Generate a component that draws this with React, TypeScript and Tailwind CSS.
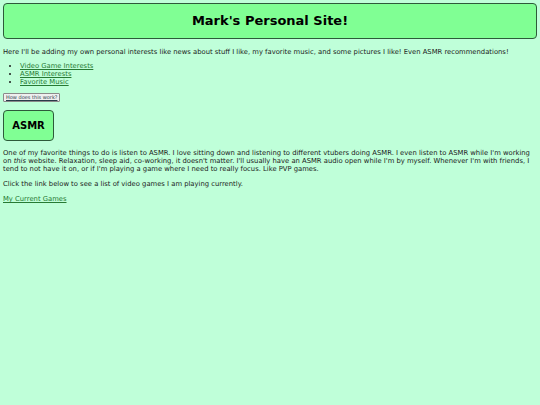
export default function App() {
  return (
    <div className="min-h-[405px] bg-[#bfffd9] p-[3px] text-[6.8px] leading-[8px] text-[#1a1a1a] font-['DejaVu_Sans',Verdana,sans-serif]">
      <header className="flex h-[36px] items-center justify-center rounded-[4px] border-[1.5px] border-[#2d5a3a] bg-[#80ff94]">
        <h1 className="text-[13px] font-bold text-black">Mark's Personal Site!</h1>
      </header>

      <p className="mt-[9px]">
        Here I'll be adding my own personal interests like news about stuff I like, my favorite music, and some pictures I like! Even ASMR recommendations!
      </p>

      <ul className="mt-[6px] list-disc pl-[17px]">
        <li><a href="#" className="text-[#267a33] underline">Video Game Interests</a></li>
        <li><a href="#" className="text-[#267a33] underline">ASMR Interests</a></li>
        <li><a href="#" className="text-[#267a33] underline">Favorite Music</a></li>
      </ul>

      <button className="mt-[7px] block rounded-[1px] border border-[#8a8a8a] bg-[#efefef] px-[2px] text-[5px] leading-[7px] text-[#2a3a4a] underline">
        How does this work?
      </button>

      <div className="mt-[8px] flex h-[31px] w-[51px] items-center justify-center rounded-[4px] border-[1.5px] border-[#2d5a3a] bg-[#80ff94]">
        <h2 className="text-[10px] font-bold text-black">ASMR</h2>
      </div>

      <p className="mt-[8px]">
        One of my favorite things to do is listen to ASMR. I love sitting down and listening to different vtubers doing ASMR. I even listen to ASMR while I'm working on <i>this</i> website. Relaxation, sleep aid, co-working, it doesn't matter. I'll usually have an ASMR audio open while I'm by myself. Whenever I'm with friends, I tend to not have it on, or if I'm playing a game where I need to really focus. Like PVP games.
      </p>

      <p className="mt-[7px]">Click the link below to see a list of video games I am playing currently.</p>

      <p className="mt-[7px]">
        <a href="#" className="text-[#267a33] underline">My Current Games</a>
      </p>
    </div>
  );
}
